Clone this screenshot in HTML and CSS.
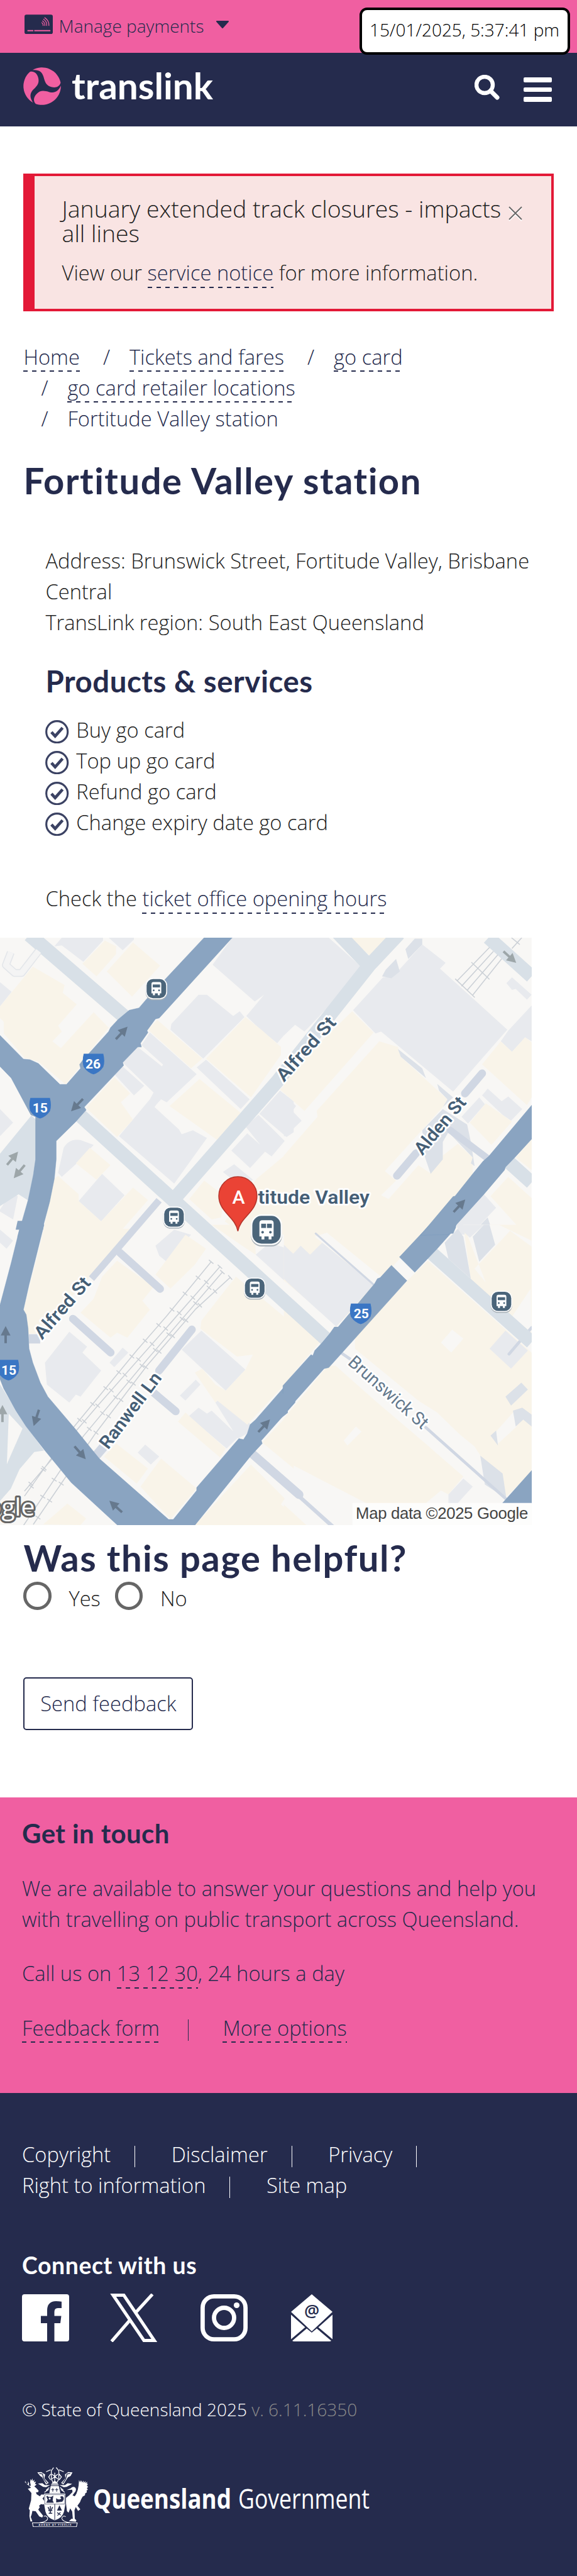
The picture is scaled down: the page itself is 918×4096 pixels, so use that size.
FILE: index.html
```html
<!DOCTYPE html>
<html lang="en">
<head>
<meta charset="utf-8">
<title>Fortitude Valley station | Translink</title>
<link rel="stylesheet" href="styles.css">
</head>
<body>
<div class="topbar">
  <svg class="card-icon" viewBox="0 0 58 40"><rect width="58" height="40" rx="4" fill="#252b4d"/><g fill="none" stroke="#f05fa1" stroke-width="1.6"><path d="M35 16q4 3 3 7M36.500 12.500q6 4 5.200 10.500M38.500 9q8 5 7 14M41 6q10 6.500 9 17"/><path d="M6 33h12M20 33h33" stroke-width="2.600"/></g></svg>
  <span class="topbar-label">Manage payments</span>
  <svg class="caret" viewBox="0 0 22 12"><path d="M2 1h18l-9 10z" fill="#252b4d" stroke="#252b4d" stroke-width="2" stroke-linejoin="round"/></svg>
  <div class="clock">15/01/2025, 5:37:41 pm</div>
</div>
<header class="header">
  <svg class="brand" viewBox="0 0 306 72">
    <g transform="translate(30 31) scale(.775)" fill="#f05fa1">
      <path id="blade" d="M-20-33A39 39 0 0 1 38-7C36 1 28 4 20 2C8-1 6-8 3-19C0-29-6-34-20-33Z"/>
      <use href="#blade" transform="rotate(120)"/><use href="#blade" transform="rotate(240)"/>
    </g>
    <text class="brand-name" x="77" y="52" textLength="225" lengthAdjust="spacingAndGlyphs">translink</text>
  </svg>
  <div class="header-tools">
    <svg class="search" viewBox="0 0 40 40"><circle cx="16" cy="16" r="13" fill="none" stroke="#fff" stroke-width="6.400"/><path d="M25.500 25.500L36 36" stroke="#fff" stroke-width="7" stroke-linecap="round"/></svg>
    <div class="burger"><i></i><i></i><i></i></div>
  </div>
</header>
<main>
  <section class="alert">
    <div class="alert-head">
      <h2 class="alert-title">January extended track closures - impacts all lines</h2>
      <svg class="close" viewBox="0 0 22 24"><path d="M1 3l20 20M21 3L1 23" stroke="#fff" stroke-width="2"/><path d="M1 1l20 20M21 1L1 21" stroke="#666" stroke-width="1.800"/></svg>
    </div>
    <p class="alert-text">View our <a class="link">service notice</a> for more information.</p>
  </section>
  <ol class="crumbs">
    <li><a class="link">Home</a></li>
    <li><span class="slash">/</span><a class="link">Tickets and fares</a></li>
    <li><span class="slash">/</span><a class="link">go card</a></li>
    <li><span class="slash">/</span><a class="link">go card retailer locations</a></li>
    <li><span class="slash">/</span><span>Fortitude Valley station</span></li>
  </ol>
  <h1 class="title">Fortitude Valley station</h1>
  <section class="details">
    <p>Address: Brunswick Street, Fortitude Valley, Brisbane Central<br>TransLink region: South East Queensland</p>
    <h2 class="subtitle">Products &amp; services</h2>
    <svg width="0" height="0" class="defs"><defs><g id="tick" fill="none" stroke="#3b4263"><circle cx="19" cy="19" r="17.300" stroke-width="3.200"/><path d="M10 19.500l6 6.500L28 12.500" stroke-width="4.800"/></g></defs></svg>
    <ul class="services">
      <li><svg viewBox="0 0 38 38"><use href="#tick"/></svg>Buy go card</li>
      <li><svg viewBox="0 0 38 38"><use href="#tick"/></svg>Top up go card</li>
      <li><svg viewBox="0 0 38 38"><use href="#tick"/></svg>Refund go card</li>
      <li><svg viewBox="0 0 38 38"><use href="#tick"/></svg>Change expiry date go card</li>
    </ul>
    <p class="hours">Check the <a class="link">ticket office opening hours</a></p>
  </section>
  <svg class="map" viewBox="0 0 1086 1200" preserveAspectRatio="none">
    <defs>
      <g id="bus"><rect x="-22" y="-21" width="44" height="44" rx="15" fill="#aab3ba"/><rect x="-22" y="-22" width="44" height="43" rx="15" fill="#fff"/><rect x="-20" y="-20" width="40" height="39" rx="13" fill="#4b657a"/><path d="M-10-10q0-4 4-4H6q4 0 4 4V9H7v4H3V9H-3v4H-7V9h-3z" fill="#fff"/><path d="M-7.500-9h15v6h-15z" fill="#4b657a"/><circle cx="-5.500" cy="3" r="1.800" fill="#4b657a"/><circle cx="5.500" cy="3" r="1.800" fill="#4b657a"/></g>
      <path id="shield" d="M-20-20H20Q24-4 20 7Q12 19 0 22Q-12 19-20 7Q-24-4-20-20Z" fill="#3a76c4"/>
      <path id="arrow" d="M-18-2.500H-2V-10L17 0L-2 10V2.500H-18Z"/>
    </defs>
    <rect width="1086" height="1200" fill="#f8f7f5"/>
    <g transform="translate(0 -14) scale(.3827 .3954)">
      <path fill="#e8eaee" d="M290 80L330 35H550V50L445 160L330 75ZM580 35H715V45L655 100ZM0 265L62 315L0 390ZM1240 35H1568V480L1480 580L1390 510L1315 440L1410 330L1360 365L1135 175ZM915 480L1060 330L1105 330L1245 440L1280 415L1305 445L1085 660L910 510ZM800 525L1050 740L890 885L860 870L710 1030L640 1055L800 870L820 835L655 680L735 600L865 700L870 690L755 590ZM610 740L655 700L770 800L715 850ZM1050 705L1100 665L1333 870L1285 920ZM635 1060L860 865L825 910L955 1025L970 1050L1030 1030L1105 1070L930 1305ZM1385 945L1495 825L1568 880V1040L1530 1065ZM1235 1135L1320 1045L1390 1105L1310 1010L1380 950L1520 1085L1450 1165L1415 1140L1335 1225ZM1190 1245L1250 1205L1350 1285L1300 1330ZM310 1250L340 1120Q370 1070 430 1080L500 1105L410 1200L330 1270ZM420 1395L545 1255L665 1365L540 1500ZM0 920L70 990L0 1060ZM0 1440L60 1350L95 1370L70 1490L0 1450Z"/>
      <path fill="#f9f4e9" d="M175 185L345 280L335 320L410 380L310 490L330 520L280 570L325 605L500 420L580 500L440 670L420 710L350 793L205 675L130 655L20 530V470L0 450V390ZM440 170L560 50L620 80V120L515 235ZM570 210L710 60L855 180L705 340ZM790 510L840 460L1080 660L1020 710ZM1100 660L1310 445L1395 510L1500 600V640L1340 860ZM905 905L1065 765L1285 940L1160 1080L1000 970ZM460 915L610 755L695 840L645 885L710 975L625 1065ZM405 1200L480 1120L590 1210L515 1285ZM310 1265L420 1360L420 1395L540 1500L710 1325L790 1390L600 1600H220L290 1280ZM1495 820L1568 750V880ZM1568 1120L1420 1240L1370 1280L1200 1500L1300 1568H1568ZM1010 1385L1090 1290L1200 1370L1180 1480L1130 1490Z"/>
    </g>
    <g transform="translate(580 -14) scale(.382 .3954)">
      <path fill="#e8eaee" d="M0 35H240L430 200L110 520L60 485L0 540ZM370 410L530 240L580 240L740 70L865 165L835 195L1195 510L905 830L520 520L490 530ZM1325 385V570L1290 550L1220 625L1160 570L1200 515ZM1190 270L1220 240L1325 330L1300 355L1240 300L1220 305ZM1060 850L1090 815L1165 880L1200 855L1275 920L1215 980L1170 950ZM950 960L1045 860L1075 895L985 995ZM0 840L65 905L45 930L95 980L10 1060H0ZM920 1510L1070 1360L1135 1430L1000 1568H940Z"/>
      <path fill="#f9f4e9" d="M350 35H590L485 150ZM0 760L365 415L480 525L110 930L0 835ZM510 570L610 600L625 650L875 870L850 910L540 1240L600 1290L520 1365L560 1385L720 1210L780 1250L850 1160L930 1100L1010 1170L1010 1260L740 1568H0V1160L180 960L175 930ZM1060 690L1160 570L1220 625L1290 550L1325 575V860L1300 900ZM995 990L1080 890L1220 985L1110 1105ZM1240 1170L1325 1075V1235ZM1105 1370L1200 1270L1325 1380V1568H1290Z"/>
      <path fill="#dce1e8" d="M650 95L700 40H740V70L665 145ZM545 200L600 145L620 210L575 245L525 235ZM610 610L740 710L760 760L625 650ZM820 790L905 860L850 910L875 870L830 825ZM740 1030L850 920L980 1000L1000 1090L1020 1215L1000 1200L1010 1170L880 1040L850 1090L850 1180L785 1255L755 1170ZM1090 1480L1120 1568H1000Z"/>
    </g>
    <g transform="translate(0 586) scale(.3827 .408)">
      <path fill="#e8eaee" d="M830 105L930 25L1020 50L890 185L850 155ZM1365 150L1440 90L1568 130V260L1530 290ZM240 690L370 535L465 610L440 640L540 730L430 860L405 850L370 890L250 800ZM585 690L655 615L685 640L610 712ZM970 625L1075 530L1310 725L1205 830ZM960 855L1045 775L1070 800L990 880ZM1150 890L1180 865L1335 995L1320 1045L1270 1070ZM1005 960L1060 915L1105 945L1130 930L1275 1060L1210 1120L1060 1000ZM735 1140L775 1100L850 1160L805 1200ZM0 25L70 80L35 120L0 90Z"/>
      <path fill="#f9f4e9" d="M235 20H720L600 140L470 270L200 545H150L125 430ZM625 180L820 310L760 380L800 425L680 565L625 540L590 565L430 440L500 370L545 260ZM830 250L990 50L1100 120L1040 200L910 320ZM1075 480L1200 330L1260 260L1568 500V750L1320 1000L1160 880L1205 830L1310 725L1350 650L1265 660L1070 520ZM1130 0H1360L1365 150L1300 110ZM1040 740L1080 720L1150 800L1205 830L1150 890ZM950 985L990 940L1205 1120L1175 1165ZM555 1160L620 1095L790 1220L730 1295ZM750 1310L860 1170L1050 1320L910 1475ZM1040 1503L1340 1200L1520 1370L1500 1400L1568 1450V1503ZM1400 1090L1568 920V1220ZM230 1500L360 1395L460 1470L430 1503Z"/>
    </g>
    <g transform="translate(580 586) scale(.382 .408)">
      <path fill="#f9f4e9" d="M0 0H790L240 550L0 750V440L20 290L0 290ZM960 0H1325V560L1000 280ZM660 280L770 180L1325 640V1240L1190 1360L1040 1140L820 940L310 640ZM0 970L230 710L310 700L800 1130L960 1260L880 1350L840 1330L760 1393H440L0 1180ZM0 400L190 590L0 800ZM0 1400L120 1503H0Z"/>
      <path fill="#f8f7f5" d="M0 280L280 500L240 550L0 340ZM165 60L230 40L520 260L480 295ZM310 640L380 560V620L810 950L1020 1110L1190 1360L1040 1320L500 890L270 700ZM840 590L900 525L960 570L895 640ZM320 1080L385 1010L415 1035L340 1105ZM960 0H1150L1325 80V110L1210 30L1020 220L1080 290ZM1140 1100L1130 1040L1230 935L1245 1010ZM1320 320L1220 460L1325 540ZM0 1190L350 1503H250L0 1270Z"/>
      <path fill="#e8eaee" d="M0 100L50 145L90 105L140 150L205 90L480 300L280 510L20 290L0 270ZM1100 620L1185 530L1305 630L1215 720ZM880 1350L960 1270L1010 1310L930 1393H880ZM920 0H1070L995 65Z"/>
      <path fill="#dce1e8" d="M860 90L930 20L960 60L1000 270L880 170ZM1010 60L1070 0H1100L1130 100L1045 185ZM1185 860L1270 790L1305 825L1215 905ZM1225 930L1275 915L1325 950V1010L1280 975L1240 1010ZM1105 1055L1135 1030L1145 1105ZM1050 1155L1170 1245L1190 1370L1075 1300Z"/>
    </g>
    <g fill="none" stroke="#d0d7e3" stroke-linecap="round">
      <path d="M325 536L187 696" stroke-width="14" stroke-linecap="butt"/><path d="M245 643L327 717M149 778L226 847M392 800L325 884M314 929L359 967M985 277L950 318M850 440L811 486" stroke-width="16"/>
      <path d="M59 819H82M195 1059L212 1039" stroke-width="19" stroke-linecap="butt"/><path d="M517 1055L611 1137" stroke-width="18"/><path d="M605 1135L683 1205" stroke-width="8"/><path d="M920 393L994 449" stroke-width="14"/>
      <path d="M696 847L715 860M870 1000L1035 1147" stroke-width="6"/><path d="M645 604L763 708" stroke-width="4"/><path d="M1086 796L1040 850" stroke-width="6"/>
    </g>
    <g fill="none" stroke="#d8e0e7">
      <path d="M60-6L255 162M165 364L680 832" stroke-width="29"/><path d="M350 540L566 294L754 57L815-8" stroke-width="28"/><path d="M690-10L752 55M998 0L1086 79M1035 454L1086 500M880 642L1086 826" stroke-width="28"/>
    </g>
    <path fill="none" stroke="#e3e6ea" stroke-width="16" stroke-linejoin="round" d="M22 30L12 56L30 72H44L78 28"/><path fill="none" stroke="#f4f4f4" stroke-width="12" stroke-linejoin="round" d="M22 30L12 56L30 72H44L79 27"/>
    <path fill="#d8e0e7" d="M64 363L74 372V453L68 484L57 536L38 524L0 548V441ZM0 912L33 965L54 998L90 1047L70 1050L40 1085L22 1125L0 1150Z"/>
    <path fill="#f8f7f5" d="M18 972L46 1002L14 1075Z"/>
    <g fill="none" stroke="#cbd0d6" stroke-width="2">
      <path d="M432 661L340 773L280 842L150 1000L50 1140M450 671L350 785L200 955L50 1130M455 682L300 862L170 1018L48 1200M471 693L400 758L300 874L195 1012L68 1198"/>
      <path stroke-width="12" stroke-dasharray="2 40" d="M432 661L340 773L280 842L150 1000L50 1140M450 671L350 785L200 955L50 1130M455 682L300 862L170 1018L48 1200M471 693L400 758L300 874L195 1012L68 1198"/>
      <path d="M1000 20L934 88M1008 28L943 99M1017 35L954 108M1025 43L965 118M930 84L970 122M963 50L1000 85M1045 0L1062 14M1066 0L1046 22"/>
    </g>
    <g fill="#8aa4c1" stroke="#7798bd" stroke-width="1.500">
      <path transform="translate(0 -14) scale(.3827 .3954)" d="M1090 35H1240L850 450L830 455L785 515L790 525L750 580L755 600H735L655 680L660 695L450 910L460 925L405 985L300 1085V1180L290 1280L265 1400L215 1580H94L150 1390L178 1260L190 1180V960L165 950L60 760L-10 690V530L125 662L160 665L205 685L320 793H355L430 710L425 690L440 670L580 520L590 500L630 458L690 410L742 398L780 355Z"/>
      <path transform="translate(0 586) scale(.3827 .408)" d="M110 0H235L155 300L125 425L140 450L150 520L155 620L175 690L215 790L255 860L400 1020L530 1170L900 1475H925L1050 1330V1315L1275 1070L1300 1075L1320 1045L1335 1000L1365 975L1575 750V890L1395 1080L1400 1095L1340 1155L1035 1510H635L380 1290L240 1130L140 1010L85 930L20 820L-5 760V420L60 190Z"/>
      <path transform="translate(580 586) scale(.382 .408)" d="M-5 805L145 650L155 655L165 630L205 590L245 545L270 512H290L485 295L500 270L515 265L575 203L658 280L240 715L215 720L-5 952ZM618 162L790-10H925L915 20L820 120L700 238ZM1330 1225L1170 1392H1330Z"/>
      <path transform="translate(580 -14) scale(.382 .3954)" d="M730 1572L905 1372L915 1370L1010 1255L1065 1190L1095 1165L1330 895V1070L1235 1170L1185 1220L1180 1235L1070 1360L920 1520L880 1568Z"/>
    </g>
    <path fill="#8aa4c1" d="M36 578L90 578L88 596L32 596ZM573 935L588 922L588 970L573 982ZM876 590L932 590L926 604L864 604Z"/>
    <g fill="#66798e">
      <use href="#arrow" transform="translate(249 194) rotate(-47)"/><use href="#arrow" transform="translate(157 342) rotate(134)"/><use href="#arrow" transform="translate(939 547) rotate(-47)"/><use href="#arrow" transform="translate(11.500 810) rotate(-90)"/><use href="#arrow" transform="translate(74 981) rotate(108)"/><use href="#arrow" transform="translate(164 1052) rotate(49)"/><use href="#arrow" transform="translate(236 1161) rotate(-138)"/><use href="#arrow" transform="translate(540 996) rotate(-47)"/>
    </g>
    <g fill="#9da6a9">
      <use href="#arrow" transform="translate(26 450) rotate(-50)"/><use href="#arrow" transform="translate(39 478) rotate(130)"/><use href="#arrow" transform="translate(1042 40) rotate(42)"/><use href="#arrow" transform="translate(5 971) rotate(-90)"/>
    </g>
    <use href="#bus" x="319.500" y="104.500"/><use href="#bus" x="355.500" y="571"/><use href="#bus" x="520.500" y="716"/><use href="#bus" x="1024.500" y="743"/>
    <use href="#shield" x="191" y="257"/><use href="#shield" x="82" y="347"/><use href="#shield" x="17" y="882"/><use href="#shield" x="737" y="767"/>
    <g class="shield-text"><text x="190" y="267">26</text><text x="82" y="357">15</text><text x="18" y="892">15</text><text x="738" y="777">25</text></g>
    <g class="map-label">
      <text transform="translate(580 296) rotate(-48.200)" textLength="163" lengthAdjust="spacingAndGlyphs">Alfred St</text>
      <text transform="translate(863 446) rotate(-50)" textLength="142" lengthAdjust="spacingAndGlyphs">Alden St</text>
      <text transform="translate(86 822) rotate(-49)" textLength="154" lengthAdjust="spacingAndGlyphs">Alfred St</text>
      <text transform="translate(221 1046) rotate(-53)" textLength="184" lengthAdjust="spacingAndGlyphs">Ranwell Ln</text>
      <text class="thin" transform="translate(709 870) rotate(41.400)" textLength="204" lengthAdjust="spacingAndGlyphs">Brunswick St</text>
      <text class="place" x="527" y="543" textLength="228" lengthAdjust="spacingAndGlyphs">titude Valley</text>
    </g>
    <use href="#bus" transform="translate(544.500 597) scale(1.450)"/><path d="M543.500 583h2v11h-2z" fill="#fff"/>
    <path d="M486 599C481 570 447 560 447 527A39 39 0 0 1 525 527C525 560 491 570 486 599Z" fill="#ea4335" stroke="#b3342a" stroke-width="2"/>
    <text class="pin-text" x="487.500" y="543.500">A</text>
    <rect x="720" y="1154" width="366" height="46" fill="#fff" opacity=".72"/>
    <text class="map-credit" x="727" y="1187" textLength="352">Map data ©2025 Google</text>
    <text class="map-logo" x="71" y="1180">Google</text>
  </svg>
  <section class="feedback">
    <h2 class="title">Was this page helpful?</h2>
    <div class="choices"><i class="radio"></i><span class="yes">Yes</span><i class="radio"></i><span>No</span></div>
    <button class="send">Send feedback</button>
  </section>
</main>
<section class="contact">
  <h3 class="contact-title">Get in touch</h3>
  <p>We are available to answer your questions and help you<br>with travelling on public transport across Queensland.</p>
  <p>Call us on <a class="link">13 12 30</a>, 24 hours a day</p>
  <p class="contact-links"><a class="link">Feedback form</a><i class="bar"></i><a class="link">More options</a></p>
</section>
<footer class="footer">
  <ul class="legal">
    <li>Copyright<i class="bar"></i></li><li>Disclaimer<i class="bar"></i></li><li>Privacy<i class="bar"></i></li>
    <li>Right to information<i class="bar"></i></li><li>Site map</li>
  </ul>
  <h3 class="connect">Connect with us</h3>
  <div class="social">
    <svg class="fb" viewBox="0 0 75 75"><path fill="#fff" d="M4 0H71Q75 0 75 4V71Q75 75 71 75H51.500V46H61L62.500 34.500H51.500V28Q51.500 22 57 22H63V11.800Q59 11 54 11Q40 11.500 40 25.500V34.500H30V46H40V75H4Q0 75 0 71V4Q0 0 4 0Z"/></svg>
    <svg class="tw" viewBox="0 0 76 77"><g fill="none" stroke="#fff" stroke-width="5"><path d="M5 2.500H22L70.500 74.500H54Z"/><path d="M67.500 1L41 30M31 43L2.500 76"/></g></svg>
    <svg class="ig" viewBox="0 0 75 75"><rect x="3.400" y="3.400" width="68.200" height="68.200" rx="18" fill="none" stroke="#fff" stroke-width="6.800"/><circle cx="37.500" cy="37.500" r="16" fill="none" stroke="#fff" stroke-width="6.800"/><circle cx="57.500" cy="17.500" r="4.600" fill="#fff"/></svg>
    <svg class="mail" viewBox="0 0 66 75"><path fill="#fff" d="M33 0L66 28L33 59L0 28ZM0 32.500L22.500 52.500L0 71.500ZM66 32.500L43.500 52.500L66 71.500ZM25 54.500L33 61L41 54.500L64 74Q63 75 61 75H5Q3 75 2 74Z"/><text x="33" y="36" class="at">@</text></svg>
  </div>
  <p class="copyright">© State of Queensland 2025 <span class="version">v. 6.11.16350</span></p>
  <svg class="gov" viewBox="50 108 400 368">
    <g fill="#fff">
      <path d="M56 195L63 204L62 190L69 205L74 216L80 206L78 194L86 206L84 218L92 226L96 218L92 200L95 180L101 192L105 176L110 194L118 184L116 200L128 196L122 210L132 214L118 226L130 236L144 252L142 260L128 262L132 274L152 286L160 276L180 276V284L168 300L178 314L190 330L172 336L158 334L146 346L152 352L142 368L172 406L166 416L148 410L126 378L106 376L102 396L96 412L106 440H94L88 408L90 372L84 362L98 310L100 266L78 240L98 234Z"/>
      <path d="M392 186L398 200L404 188L412 202L418 190L422 204L430 192L432 206L442 196L440 210L447 210L440 222L448 228L440 236L446 246L438 252L440 262L430 268L428 280L414 288L404 306L398 322L382 344L400 366L386 376L372 352L364 372L366 424L376 434L372 442L330 438L346 424H354L350 380L338 360L328 386L318 378L312 330L312 296L332 280L352 260L350 246L316 248L340 238Q350 224 366 230Q378 240 370 256L352 280L366 286Q390 256 392 186Z"/>
      <path d="M210 268L214 242Q222 196 243 192Q266 196 272 242L278 268ZM178 270H308V334L300 380Q290 420 243 434Q196 420 186 380L178 334Z"/>
      <path d="M136 140L160 138L184 152L180 176L206 204L190 214L166 170L154 162ZM352 140L326 138L306 152L308 176L282 204L296 214L324 170L340 162ZM140 208L168 206L182 218L214 218L190 230L172 228ZM350 210L322 206L306 218L272 218L298 230L316 228Z"/>
    </g>
    <g fill="none" stroke="#fff" stroke-width="5">
      <path d="M236 110L222 130V180L232 200M252 110L268 130V180L258 200M190 136L218 124M298 136L270 124M218 150L206 168L218 186M270 150L284 168L270 186M226 150L262 180M262 150L226 180M243 142V194M190 250L210 232M180 262L206 244M296 250L276 232M304 262L280 244"/>
      <path d="M106 449H381L376 473H111ZM150 448Q200 442 200 420Q190 400 176 410M338 448Q288 442 286 420Q296 400 310 412" stroke-width="4"/>
    </g>
    <g fill="none" stroke="#252b4d" stroke-width="4">
      <path d="M148 146L168 150L176 180L196 206M338 146L318 150L310 180L292 206" stroke-width="5"/>
      <path d="M182 276H304V334H182Z" stroke-width="2.500"/><path d="M243 335V432M216 212H270M216 222H270M222 246H240M231 236V258M246 246H264M255 236V258"/>
      <path d="M194 288Q198 284 204 292H222L232 286L228 312L234 324H194L202 308ZM252 300Q270 316 286 300Q270 286 290 288Q304 300 288 318L252 322" fill="#252b4d"/><circle cx="212" cy="300" r="6" fill="#fff" stroke="none"/>
      <path d="M202 352L210 370M216 346V390M230 352L222 370M204 374H228M206 390H228" stroke-width="6"/><path d="M260 372L272 346L284 372Z" fill="#252b4d"/><path d="M258 386L280 402M278 384L260 404" stroke-width="5"/>
    </g>
    <text class="motto" x="244" y="467" textLength="200">AUDAX AT FIDELIS</text>
  </svg>
  <div class="gov-name">
    <svg class="gov-first" viewBox="0 0 222 64"><text class="gov-bold" x="0" y="46.500" textLength="220" lengthAdjust="spacingAndGlyphs">Queensland</text></svg>
    <svg class="gov-second" viewBox="0 0 212 64"><text class="gov-light" x="0" y="46.500" textLength="209" lengthAdjust="spacingAndGlyphs">Government</text></svg>
  </div>
</footer>
</body>
</html>
```
FILE: styles.css
```css
* { box-sizing: border-box; }
body { margin: 0; width: 918px; background: #fff; color: #222; font: 300 32.7px/49px "Open Sans", sans-serif; }
h1, h2, h3, p, ul, ol { margin: 0; padding: 0; list-style: none; }
svg { display: block; flex: none; }
.link { color: #252b4d; padding-bottom: 2px; background: repeating-linear-gradient(90deg, #252b4d 0 7px, transparent 7px 14px) 0 100% / 100% 2.4px no-repeat; }

.topbar { position: relative; display: flex; align-items: flex-start; height: 84px; padding-left: 38.500px; background: #f05fa1; color: #252b4d; }
.card-icon { width: 45px; height: 31.500px; margin-top: 22.500px; }
.topbar-label { margin: 20px 0 0 10px; font-size: 28px; line-height: 42px; white-space: nowrap; }
.caret { width: 22px; height: 12px; margin: 32.700px 0 0 19px; }
.clock { position: absolute; top: 12px; right: 11.500px; width: 335px; height: 74.500px; border: 4.670px solid #000; border-radius: 12px; background: #fff; color: #000; font-size: 28px; line-height: 63px; text-align: center; white-space: nowrap; }
.header { display: flex; justify-content: space-between; height: 117px; padding: 22px 40px 0 37px; background: #252b4d; }
.brand { width: 306px; height: 72px; }
.brand-name { font: 700 58px Lato, sans-serif; fill: #fff; }
.header-tools { display: flex; gap: 38px; }
.search { width: 40px; height: 40px; margin-top: 13px; }
.burger { display: flex; flex-direction: column; gap: 8px; margin-top: 17px; }
.burger i { width: 45px; height: 7.700px; border-radius: 2px; background: #fff; }

.alert { margin: 74.500px 37.400px 0; height: 219.500px; border: 4.670px solid #e31937; border-left-width: 18.700px; background: #f9e4e3; padding: 32.200px 0 0 43.200px; }
.alert-head { display: flex; }
.alert-title { width: 710px; font-size: 37.400px; line-height: 39.700px; font-weight: 300; }
.close { width: 22px; height: 24px; margin-top: 16px; }
.alert-text { margin-top: 18px; }
.crumbs { display: flex; flex-wrap: wrap; column-gap: 9px; margin: 47.600px 37.400px 0; color: #252b4d; }
.crumbs li { display: flex; height: 49px; align-items: flex-start; }
.crumbs .link, .crumbs li > span { display: block; height: 48.700px; }
.crumbs .slash { width: 42px; margin-left: 28px; }
.crumbs li:nth-child(4), .crumbs li:nth-child(5) { width: 100%; }
.title { color: #252b4d; font: 700 58px/56px Lato, sans-serif; letter-spacing: 1.500px; }
h1.title { margin: 46.200px 37.400px 0; }
.details { padding: 75.300px 60px 0 72.400px; }
.subtitle { margin-top: 44.900px; color: #252b4d; font: 700 47.400px/47px Lato, sans-serif; letter-spacing: .550px; }
.defs { position: absolute; }
.services { margin-top: 29.800px; }
.services li { display: flex; align-items: center; height: 49.100px; gap: 11.500px; }
.services svg { width: 37.400px; height: 37.400px; margin-top: 6px; }
.hours { margin-top: 71.900px; }

.map { width: 845.700px; height: 934.600px; margin-top: 37.500px; overflow: hidden; }
.map-label { font: 600 37px Roboto, sans-serif; fill: #455e75; stroke: #fff; stroke-width: 7; stroke-linejoin: round; paint-order: stroke; }
.map-label .thin { font-weight: 400; fill: #64798d; }
.map-label .place { font-size: 39px; }
.shield-text { font: 700 27px Roboto, sans-serif; fill: #fff; text-anchor: middle; }
.pin-text { font: 500 39px Roboto, sans-serif; fill: #fff; text-anchor: middle; }
.map-credit { font: 33px "Liberation Sans", sans-serif; fill: #444; }
.map-logo { font: 500 50px "Open Sans", sans-serif; fill: #fff; stroke: #666; stroke-width: 8; stroke-linejoin: round; paint-order: stroke; text-anchor: end; }

.feedback { padding: 24.300px 37.400px 0; height: 433.300px; }
.choices { display: flex; height: 49px; margin-top: 9.600px; }
.radio { width: 44.500px; height: 44.500px; border: 5px solid #666; border-radius: 50%; margin-right: 27.500px; }
.choices span { line-height: 54px; }
.choices .yes { width: 73.500px; }
.send { display: block; width: 270px; height: 84px; margin: 102.800px 0 0; padding: 0; border: 2.340px solid #252b4d; border-radius: 5px; background: #fff; color: #252b4d; font: inherit; }

.contact { height: 469.700px; padding: 35.300px 35px 0; background: #f05fa1; color: #252b4d; white-space: nowrap; }
.contact-title { margin-bottom: 42px; font: 700 42px/43px Lato, sans-serif; letter-spacing: .400px; margin-bottom: 41px; }
.contact p { margin-bottom: 37.400px; }
.bar { display: inline-block; width: 1.500px; height: 34px; background: currentColor; vertical-align: -8px; }
.contact-links .bar { margin: 0 54px 0 45px; }
.footer { display: grid; grid-template-columns: auto 1fr; align-content: start; height: 768px; padding: 72.700px 35px 0; background: #252b4d; color: #fff; }
.footer > * { grid-column: 1 / -1; }
.legal { display: flex; flex-wrap: wrap; column-gap: 57.500px; width: 720px; }
.legal .bar { width: 1px; margin-left: 38px; }
.connect { margin-top: 84px; font: 700 37.400px/38px Lato, sans-serif; letter-spacing: .600px; }
.social { display: flex; align-items: center; height: 77px; margin-top: 26.700px; }
.fb, .ig { width: 75px; height: 75px; }
.tw { width: 76px; height: 77px; margin: 0 67.500px 0 65px; }
.mail { width: 66px; height: 75px; margin-left: 69px; }
.at { font: 600 27px "Open Sans", sans-serif; fill: #252b4d; text-anchor: middle; }
.copyright { margin-top: 85.900px; font-size: 28px; line-height: 42px; }
.version { color: #8a8a8a; }
.footer > .gov { grid-column: 1; width: 103.800px; height: 95.500px; margin: 70.600px 0 0 2px; }
.footer > .gov-name { grid-column: 2; display: flex; gap: 9.500px; margin: 89.500px 0 0 7.200px; }
.gov-first { width: 222px; height: 64px; }
.gov-second { width: 212px; height: 64px; }
.gov-bold { font: 700 43px "Open Sans", sans-serif; fill: #fff; }
.gov-light { font: 400 43px "Open Sans", sans-serif; fill: #fff; }
.motto { font: 700 14px "Open Sans", sans-serif; fill: #fff; text-anchor: middle; }
```
